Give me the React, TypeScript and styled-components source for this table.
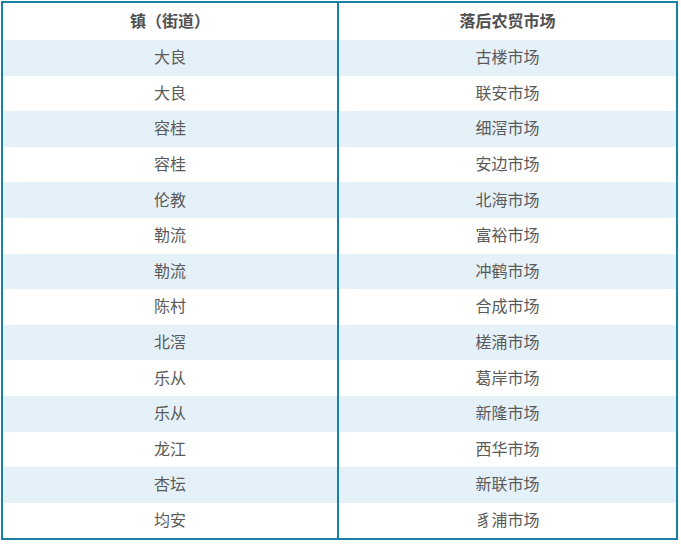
import styled, { createGlobalStyle } from 'styled-components';

const GlobalStyle = createGlobalStyle`
  html, body {
    margin: 0;
    padding: 0;
    background: #ffffff;
  }
  body {
    font-family: "Microsoft YaHei", "Noto Sans CJK SC", "Noto Sans", sans-serif;
  }
`;

const Page = styled.div`
  padding: 1px 0 0 1px;
`;

const Table = styled.table`
  width: 677px;
  border-collapse: collapse;
  border: 2px solid #1b80a8;
  table-layout: fixed;
  color: #5a5a5a;
  font-size: 16px;
`;

const HeadCell = styled.th`
  height: 34px;
  padding: 0 0 3px;
  font-weight: bold;
  text-align: center;
  color: #505050;
  border-left: 2px solid #1b80a8;
  &:first-child {
    border-left: none;
  }
`;

const Row = styled.tr<{ $striped: boolean }>`
  background: ${(p) => (p.$striped ? '#e5f1f8' : '#ffffff')};
`;

const Cell = styled.td`
  height: 32.6px;
  padding: 0 0 3px;
  text-align: center;
  border-left: 2px solid #1b80a8;
  &:first-child {
    border-left: none;
  }
`;

const rows: [string, string][] = [
  ['大良', '古楼市场'],
  ['大良', '联安市场'],
  ['容桂', '细滘市场'],
  ['容桂', '安边市场'],
  ['伦教', '北海市场'],
  ['勒流', '富裕市场'],
  ['勒流', '冲鹤市场'],
  ['陈村', '合成市场'],
  ['北滘', '槎涌市场'],
  ['乐从', '葛岸市场'],
  ['乐从', '新隆市场'],
  ['龙江', '西华市场'],
  ['杏坛', '新联市场'],
  ['均安', '豸浦市场'],
];

const App = (): JSX.Element => {
  return (
    <Page>
      <GlobalStyle />
      <Table>
        <colgroup>
          <col style={{ width: '336px' }} />
          <col />
        </colgroup>
        <thead>
          <tr>
            <HeadCell>镇（街道）</HeadCell>
            <HeadCell>落后农贸市场</HeadCell>
          </tr>
        </thead>
        <tbody>
          {rows.map(([town, market], i) => (
            <Row key={i} $striped={i % 2 === 0}>
              <Cell>{town}</Cell>
              <Cell>{market}</Cell>
            </Row>
          ))}
        </tbody>
      </Table>
    </Page>
  );
};

export default App;
